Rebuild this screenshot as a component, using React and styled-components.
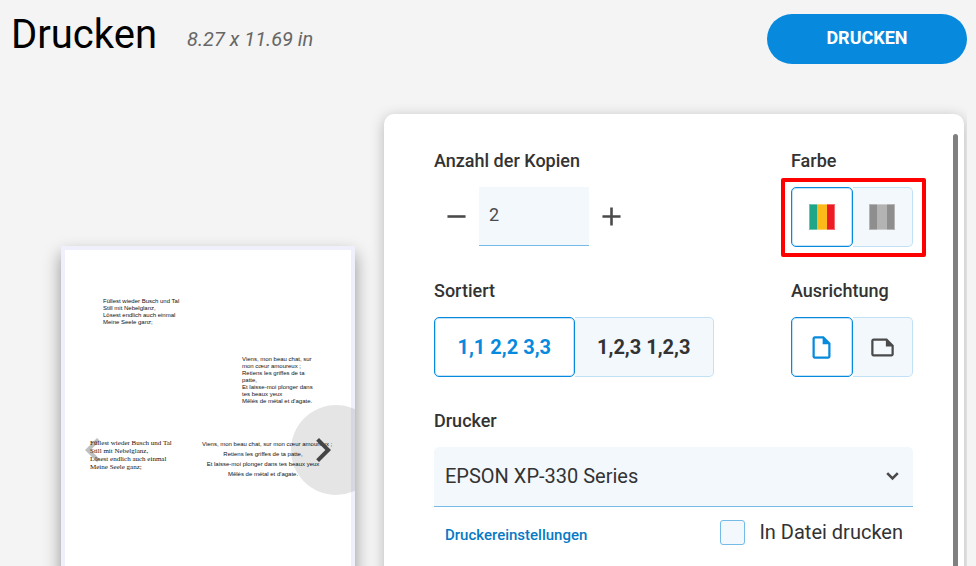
import { useState } from "react";
import styled, { createGlobalStyle, css } from "styled-components";
import {
  MdAdd,
  MdChevronLeft,
  MdChevronRight,
  MdOutlineInsertDriveFile,
  MdOutlineNote,
  MdRemove,
} from "react-icons/md";

const GlobalStyle = createGlobalStyle`
  :root {
    --color-page: #f4f4f4;
    --color-blue: #078ade;
    --color-blue-300: #74bbe8;
    --color-blue-200: #c2e1f7;
    --color-blue-50: #f3f8fd;
    --color-text: #333;
    --color-icon: #4a4a4a;
  }

  *,
  *::before,
  *::after {
    box-sizing: border-box;
  }

  body {
    margin: 0;
    overflow: hidden;
    background-color: var(--color-page);
    color: var(--color-text);
    font-family: Roboto, sans-serif;
  }

  button,
  input,
  select {
    font: inherit;
    color: inherit;
  }
`;

const Page = styled.div`
  display: flex;
  flex-direction: column;
  height: 100vh;
`;

const Header = styled.header`
  display: flex;
  align-items: flex-start;
  gap: 30px;
  padding: 14px 9px 0 11px;
`;

const Title = styled.h1`
  margin: 0;
  color: #000;
  font-size: 40px;
  font-weight: 400;
  line-height: 42px;
`;

const PageSize = styled.span`
  color: #666;
  font-size: 20px;
  font-style: italic;
  line-height: 50px;
`;

const PrintButton = styled.button`
  width: 200px;
  height: 50px;
  margin-left: auto;
  padding: 0 0 3px;
  border: none;
  border-radius: 25px;
  background-color: var(--color-blue);
  color: #fff;
  font-size: 18px;
  font-weight: 700;
  cursor: pointer;
`;

const Main = styled.main`
  display: grid;
  grid-template-columns: 384px 1fr;
  flex: 1;
  min-height: 0;
  margin-right: 9px;
  padding: 50px 3px 0 0;
  overflow: hidden;
`;

const Preview = styled.section`
  padding: 132px 29px 0 61px;
`;

const Paper = styled.div`
  position: relative;
  aspect-ratio: 294 / 408;
  border: 4px solid #f0f0fc;
  background-color: #fff;
  box-shadow: 0 8px 16px rgba(0, 0, 0, 0.4);
`;

const Sheet = styled.div`
  display: flex;
  flex-direction: column;
  padding: 48px 27px 0 25px;
  color: #111;
  font-family: "Liberation Sans", Arial, sans-serif;
  font-size: 6px;
  line-height: 7px;
`;

const Verse = styled.p`
  margin: 0;
  white-space: pre;
`;

const TopVerse = styled(Verse)`
  margin-left: 13px;
`;

const SideVerse = styled(Verse)`
  margin: 30px 0 0 152px;
`;

const VerseRow = styled.div`
  display: flex;
  justify-content: space-between;
  margin-top: 34px;
`;

const SerifVerse = styled(Verse)`
  font-family: "Liberation Serif", "Times New Roman", serif;
  font-size: 7px;
  line-height: 8px;
`;

/* the first line is longer than the text frame and runs out of it */
const CenteredVerse = styled(Verse)`
  width: 122px;
  text-align: center;
  line-height: 10px;
`;

const NavLayer = styled.div`
  position: absolute;
  inset: -4px;
  overflow: hidden;
`;

const NavButton = styled.button`
  position: absolute;
  top: 50%;
  display: flex;
  align-items: center;
  justify-content: center;
  width: 90px;
  height: 90px;
  border: none;
  border-radius: 50%;
  transform: translateY(-50%);

  ${(props) =>
    props.$side === "left"
      ? css`
          left: -26px;
          padding: 0 0 0 26px;
          background: none;
          color: rgba(0, 0, 0, 0.25);
        `
      : css`
          right: -26px;
          padding: 0 26px 0 0;
          background-color: rgba(0, 0, 0, 0.1);
          color: #444;
          cursor: pointer;
        `}

  & svg {
    flex-shrink: 0;
  }
`;

const Panel = styled.section`
  display: flex;
  justify-content: space-between;
  border-radius: 10px 10px 0 0;
  background-color: #fff;
  box-shadow: 0 3px 14px rgba(0, 0, 0, 0.25);
`;

const Form = styled.form`
  display: grid;
  grid-template-columns: 1fr 122px;
  align-content: start;
  row-gap: 32px;
  flex: 1;
  padding: 35px 40px 0 50px;
`;

const ScrollThumb = styled.div`
  width: 5px;
  margin: 20px 6px 0 0;
  border-radius: 3px 3px 0 0;
  background-color: #808080;
`;

const Field = styled.div`
  display: flex;
  flex-direction: column;
  align-items: flex-start;
  gap: 14px;
  ${(props) => props.$wide && "grid-column: 1 / -1;"}
`;

const Label = styled.label`
  font-size: 18px;
  font-weight: 500;
  line-height: 24px;
`;

const Stepper = styled.div`
  display: flex;
  height: 59px;
`;

const StepButton = styled.button`
  display: flex;
  align-items: center;
  justify-content: center;
  width: 45px;
  padding: 0;
  border: none;
  background: none;
  color: var(--color-icon);
  cursor: pointer;
`;

const CopiesInput = styled.input`
  width: 110px;
  padding: 0 10px 4px;
  border: none;
  border-bottom: 1px solid var(--color-blue-300);
  border-radius: 0;
  background-color: var(--color-blue-50);
  color: var(--color-icon);
  font-size: 18px;
  outline: none;
`;

const Toggle = styled.div`
  display: flex;
  width: ${(props) => (props.$wide ? "280px" : "122px")};
  height: 60px;
`;

const Highlight = styled.div`
  position: relative;

  &::after {
    content: "";
    position: absolute;
    inset: -9px -13px -10px -10px;
    border: 4px solid #fe0000;
    border-radius: 2px;
    pointer-events: none;
  }
`;

const ToggleButton = styled.button`
  display: flex;
  align-items: center;
  justify-content: center;
  flex: 1;
  padding: 0;
  border: 1px solid var(--color-blue-200);
  background-color: var(--color-blue-50);
  color: var(--color-text);
  font-size: 20px;
  font-weight: 700;
  cursor: pointer;

  & svg {
    color: var(--color-icon);
  }

  &:first-child {
    border-radius: 5px 0 0 5px;
    border-right: none;
  }

  &:last-child {
    border-radius: 0 5px 5px 0;
    border-left: none;
  }

  &&[aria-pressed="true"] {
    border: 1px solid var(--color-blue);
    border-radius: 5px;
    background-color: #fff;
    box-shadow: inset 0 0 0 1px var(--color-blue-200);
    color: var(--color-blue);
  }

  &&[aria-pressed="true"] svg {
    color: var(--color-blue);
  }
`;

const SelectBox = styled.div`
  position: relative;
  width: 100%;

  & svg {
    position: absolute;
    top: 25px;
    right: 14px;
    pointer-events: none;
  }
`;

const Select = styled.select`
  display: block;
  width: 100%;
  height: 60px;
  padding: 0 40px 2px 11px;
  border: none;
  border-bottom: 1px solid var(--color-blue-300);
  border-radius: 5px 5px 0 0;
  background-color: var(--color-blue-50);
  font-size: 20px;
  appearance: none;
  outline: none;
`;

const PrinterOptions = styled.div`
  display: flex;
  align-items: flex-start;
  justify-content: space-between;
  width: 100%;
  padding: 0 10px 0 11px;
`;

const SettingsLink = styled.a`
  padding-top: 2px;
  color: #0779c4;
  font-size: 15px;
  font-weight: 500;
  line-height: 24px;
  text-decoration: none;
`;

const CheckLabel = styled.label`
  display: flex;
  align-items: flex-start;
  gap: 14px;
  margin-top: -1px;
  font-size: 20px;
  line-height: 24px;
`;

const Checkbox = styled.input`
  width: 25px;
  height: 25px;
  margin: 0;
  border: 1px solid var(--color-blue-300);
  border-radius: 3px;
  background-color: var(--color-blue-50);
  appearance: none;

  &:checked {
    background-color: var(--color-blue);
  }
`;

function StripesIcon({ colors }) {
  const [left, middle, right] = colors;

  return (
    <svg width="26" height="26" viewBox="0 0 26 26" aria-hidden="true">
      <rect width="8" height="26" fill={left} />
      <rect x="8" width="10" height="26" fill={middle} />
      <rect x="18" width="8" height="26" fill={right} />
      <rect
        x="0.5"
        y="0.5"
        width="25"
        height="25"
        fill="none"
        stroke="#fff"
        strokeOpacity="0.35"
      />
    </svg>
  );
}

function ArrowIcon() {
  return (
    <svg width="13" height="9" viewBox="0 0 13 9" aria-hidden="true">
      <path
        d="M1.2 1.2L6.5 6.5L11.8 1.2"
        fill="none"
        stroke="#4a4a4a"
        strokeWidth="2.6"
      />
    </svg>
  );
}

const verseDe = `Füllest wieder Busch und Tal
Still mit Nebelglanz,
Lösest endlich auch einmal
Meine Seele ganz;`;

const verseFrNarrow = `Viens, mon beau chat, sur
mon cœur amoureux ;
Retiens les griffes de ta
patte,
Et laisse-moi plonger dans
tes beaux yeux
Mêlés de métal et d'agate.`;

const verseFr = `Viens, mon beau chat, sur mon cœur amoureux ;
Retiens les griffes de ta patte,
Et laisse-moi plonger dans tes beaux yeux
Mêlés de métal et d'agate.`;

function PagePreview() {
  return (
    <Preview>
      <Paper>
        <Sheet>
          <TopVerse>{verseDe}</TopVerse>
          <SideVerse>{verseFrNarrow}</SideVerse>
          <VerseRow>
            <SerifVerse>{verseDe}</SerifVerse>
            <CenteredVerse>{verseFr}</CenteredVerse>
          </VerseRow>
        </Sheet>
        <NavLayer>
          <NavButton $side="left" disabled aria-label="Vorherige Seite">
            <MdChevronLeft size={48} />
          </NavButton>
          <NavButton $side="right" aria-label="Nächste Seite">
            <MdChevronRight size={48} />
          </NavButton>
        </NavLayer>
      </Paper>
    </Preview>
  );
}

function PrintForm() {
  const [copies, setCopies] = useState(2);
  const [color, setColor] = useState(true);
  const [collated, setCollated] = useState(false);
  const [portrait, setPortrait] = useState(true);

  return (
    <Form onSubmit={(e) => e.preventDefault()}>
      <Field>
        <Label htmlFor="copies">Anzahl der Kopien</Label>
        <Stepper>
          <StepButton
            type="button"
            aria-label="Weniger Kopien"
            onClick={() => setCopies((n) => Math.max(1, n - 1))}
          >
            <MdRemove size={31} />
          </StepButton>
          <CopiesInput
            id="copies"
            inputMode="numeric"
            value={copies}
            onChange={(e) => setCopies(Number(e.target.value) || 1)}
          />
          <StepButton
            type="button"
            aria-label="Mehr Kopien"
            onClick={() => setCopies((n) => n + 1)}
          >
            <MdAdd size={31} />
          </StepButton>
        </Stepper>
      </Field>

      <Field>
        <Label as="span" id="color-label">
          Farbe
        </Label>
        <Highlight>
          <Toggle role="group" aria-labelledby="color-label">
            <ToggleButton
              type="button"
              aria-label="Farbe"
              aria-pressed={color}
              onClick={() => setColor(true)}
            >
              <StripesIcon colors={["#1fa587", "#fdb91a", "#ed1c24"]} />
            </ToggleButton>
            <ToggleButton
              type="button"
              aria-label="Graustufen"
              aria-pressed={!color}
              onClick={() => setColor(false)}
            >
              <StripesIcon colors={["#8e8e8e", "#b3b3b3", "#8e8e8e"]} />
            </ToggleButton>
          </Toggle>
        </Highlight>
      </Field>

      <Field>
        <Label as="span" id="collate-label">
          Sortiert
        </Label>
        <Toggle $wide role="group" aria-labelledby="collate-label">
          <ToggleButton
            type="button"
            aria-pressed={!collated}
            onClick={() => setCollated(false)}
          >
            1,1 2,2 3,3
          </ToggleButton>
          <ToggleButton
            type="button"
            aria-pressed={collated}
            onClick={() => setCollated(true)}
          >
            1,2,3 1,2,3
          </ToggleButton>
        </Toggle>
      </Field>

      <Field>
        <Label as="span" id="orientation-label">
          Ausrichtung
        </Label>
        <Toggle role="group" aria-labelledby="orientation-label">
          <ToggleButton
            type="button"
            aria-label="Hochformat"
            aria-pressed={portrait}
            onClick={() => setPortrait(true)}
          >
            <MdOutlineInsertDriveFile size={27} />
          </ToggleButton>
          <ToggleButton
            type="button"
            aria-label="Querformat"
            aria-pressed={!portrait}
            onClick={() => setPortrait(false)}
          >
            <MdOutlineNote size={27} />
          </ToggleButton>
        </Toggle>
      </Field>

      <Field $wide>
        <Label htmlFor="printer">Drucker</Label>
        <SelectBox>
          <Select id="printer">
            <option>EPSON XP-330 Series</option>
          </Select>
          <ArrowIcon />
        </SelectBox>
        <PrinterOptions>
          <SettingsLink href="#settings">Druckereinstellungen</SettingsLink>
          <CheckLabel>
            <Checkbox type="checkbox" />
            In Datei drucken
          </CheckLabel>
        </PrinterOptions>
      </Field>
    </Form>
  );
}

function App() {
  return (
    <>
      <GlobalStyle />
      <Page>
        <Header>
          <Title>Drucken</Title>
          <PageSize>8.27 x 11.69 in</PageSize>
          <PrintButton>DRUCKEN</PrintButton>
        </Header>
        <Main>
          <PagePreview />
          <Panel>
            <PrintForm />
            <ScrollThumb />
          </Panel>
        </Main>
      </Page>
    </>
  );
}

export default App;
